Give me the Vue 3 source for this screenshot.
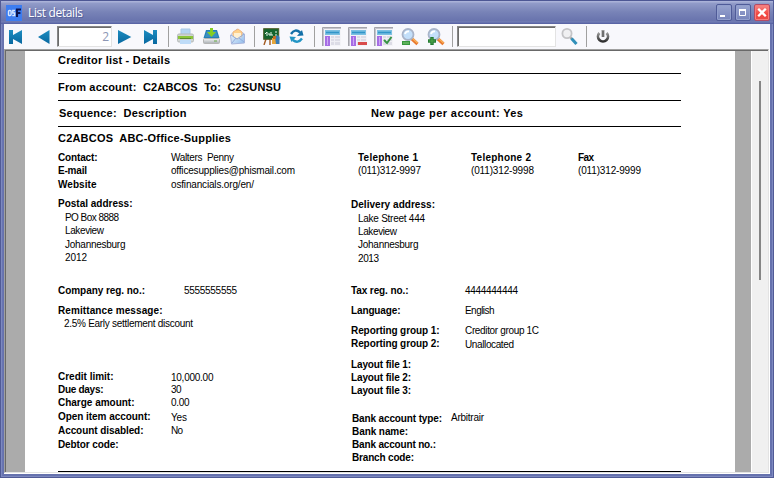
<script setup>
const titles = {
  list: 'Creditor list - Details',
  range: 'From account:  C2ABCOS  To:  C2SUNSU',
  sequence: 'Sequence:  Description',
  paging: 'New page per account: Yes',
  account: 'C2ABCOS  ABC-Office-Supplies',
}
// Each report line: [baseline, text, width, style, indent]
const columns = [
  [
    [161, 'Contact:', 39.5, 'b'], [174, 'E-mail', 29, 'b'], [188, 'Website', 38.5, 'b'],
    [207, 'Postal address:', 74.5, 'b'],
    [221, 'PO Box 8888', 54, '', 7], [234, 'Lakeview', 39, '', 7],
    [248, 'Johannesburg', 60.5, '', 7], [261, '2012', 22, '', 7],
    [294, 'Company reg. no.:', 87, 'b'], [314, 'Remittance message:', 104.5, 'b'],
    [327, '2.5% Early settlement discount', 129, '', 6],
    [380, 'Credit limit:', 55.5, 'b'], [393, 'Due days:', 45.5, 'b'],
    [406, 'Charge amount:', 76.5, 'b'], [420, 'Open item account:', 92.5, 'b'],
    [434, 'Account disabled:', 85.5, 'b'], [448, 'Debtor code:', 60.5, 'b'],
  ],
  [
    [161, 'Walters  Penny', 63], [174, 'officesupplies@phismail.com', 124],
    [188, 'osfinancials.org/en/', 83], [294, '5555555555', 53, '', 13],
    [381, '10,000.00', 42.5], [393, '30', 10.5], [406, '0.00', 18.5], [421, 'Yes', 16], [434, 'No', 12],
  ],
  [
    [161, 'Telephone 1', 60, 'b', 7], [174, '(011)312-9997', 63, '', 7],
    [208, 'Delivery address:', 84, 'b'], [222, 'Lake Street 444', 67, '', 7],
    [235, 'Lakeview', 39, '', 7], [248, 'Johannesburg', 60.5, '', 7], [262, '2013', 21, '', 7],
    [294, 'Tax reg. no.:', 57.5, 'b'], [314, 'Language:', 49.5, 'b'],
    [334, 'Reporting group 1:', 88.5, 'b'], [347, 'Reporting group 2:', 88.5, 'b'],
    [368, 'Layout file 1:', 60, 'b'], [381, 'Layout file 2:', 60, 'b'], [394, 'Layout file 3:', 60, 'b'],
    [422, 'Bank account type:', 90, 'b', 1], [435, 'Bank name:', 56, 'b', 1],
    [448, 'Bank account no.:', 84, 'b', 1], [461, 'Branch code:', 62, 'b', 1],
  ],
  [
    [161, 'Telephone 2', 60, 'b', 20], [174, '(011)312-9998', 63, '', 20],
    [294, '4444444444', 53, '', 14], [314, 'English', 29.5, '', 14],
    [334, 'Creditor group 1C', 74, '', 14], [348, 'Unallocated', 49, '', 14], [421, 'Arbitrair', 33],
  ],
  [[161, 'Fax', 16, 'b'], [174, '(011)312-9999', 63]],
].map((rows) => {
  let end = 149
  return rows.map(([base, text, width, kind, indent]) => {
    const gap = base - 9 - end
    end = base + 3
    return { text, width, bold: kind === 'b', style: { marginTop: gap + 'px', paddingLeft: (indent || 0) + 'px' } }
  })
})

// Tracks text out or in so that it fills its printed width
const vFit = {
  mounted(el, { value }) {
    const natural = el.getBoundingClientRect().width
    el.style.letterSpacing = (value - natural) / Math.max(1, el.textContent.length - 1) + 'px'
  },
}
</script>

<template>
  <div class="window">
    <header class="titlebar">
      <svg class="app" width="16" height="16" viewBox="0 0 16 16">
        <rect width="16" height="16" fill="#3d7df0" />
        <g fill="none" stroke="#d8e8ff" stroke-width="1.4">
          <rect x="2.5" y="5.5" width="2.6" height="5" rx="1" />
          <path d="M9 5.5H6.8V8H8.7V10.5H6.3" />
        </g>
        <path d="M11 12V4.5H15M11 8H14.4" fill="none" stroke="#0a1450" stroke-width="2.1" />
      </svg>
      <span class="title"><span v-fit="55">List details</span></span>
      <div class="winbtns">
        <i class="wb"><svg width="14" height="15"><rect x="3" y="10" width="5" height="2" fill="#fff" /></svg></i>
        <i class="wb"><svg width="14" height="15"><path d="M3.5 4V10.5H9.5V4" fill="none" stroke="#fff" /><rect x="3" y="4" width="7" height="2" fill="#fff" /></svg></i>
        <i class="wb close"><svg width="14" height="15"><path d="M3.2 3.7L10.8 11.3M10.8 3.7L3.2 11.3" stroke="#fff" stroke-width="2.3" /></svg></i>
      </div>
    </header>

    <div class="client">
      <nav class="toolbar">
        <svg width="0" height="0" class="defs">
          <defs>
            <linearGradient id="nav" x1="0" y1="0" x2="0" y2="1"><stop offset="0" stop-color="#1d8cc0" /><stop offset="1" stop-color="#0868a0" /></linearGradient>
            <linearGradient id="tray" x1="0" y1="0" x2="0" y2="1"><stop offset="0" stop-color="#f4f4f4" /><stop offset="1" stop-color="#a9afb5" /></linearGradient>
            <linearGradient id="env" x1="0" y1="0" x2="1" y2="1"><stop offset="0" stop-color="#fff" /><stop offset="1" stop-color="#8dbbed" /></linearGradient>
            <linearGradient id="pow" x1="0" y1="0" x2="0" y2="1"><stop offset="0" stop-color="#999" /><stop offset="1" stop-color="#303030" /></linearGradient>
          </defs>
        </svg>
        <span class="tool first"><svg width="14" height="14"><path d="M0 0H4V5L13 0V14L4 9V14H0Z" fill="url(#nav)" /></svg></span>
        <span class="tool prev"><svg width="12" height="14"><path d="M0 7L11.5 0V14Z" fill="url(#nav)" /></svg></span>
        <span class="field page">2</span>
        <span class="tool"><svg width="14" height="14"><path d="M0 0L13.3 7L0 14Z" fill="url(#nav)" /></svg></span>
        <span class="tool"><svg width="14" height="14"><path d="M13 0H9V5L0 0V14L9 9V14H13Z" fill="url(#nav)" /></svg></span>
        <span class="sep" />
        <span class="tool odd"><svg width="17" height="17"><path d="M4 1H13V8H4Z" fill="#b5d5f3" stroke="#a9c8e6" /><rect x=".5" y="6" width="16" height="8" rx="1.5" fill="#d0d4d2" stroke="#b4b9b9" /><path d="M1 8H16V11H1Z" fill="#8cc63b" /><path d="M3 10.5H14" stroke="#5d8a34" /><path d="M3 12H14V16H3Z" fill="#bfdcf8" /></svg></span>
        <span class="tool odd"><svg width="17" height="17"><path d="M3 2H14L16.5 10H.5Z" fill="#2580b5" /><path d="M4 3H13L15 9H2Z" fill="#3a8fc0" /><rect x=".5" y="10.5" width="16" height="5" rx="1" fill="url(#tray)" stroke="#b4b4b4" /><path d="M7 0H10V4H13L8.5 9L4 4H7Z" fill="#85ce22" /><path d="M11 13H14" stroke="#67ab45" /></svg></span>
        <span class="tool odd"><svg width="17" height="17"><path d="M1.5 7L8 1L15.5 6V15L2.5 16Z" fill="url(#env)" stroke="#a9b5dc" /><path d="M4 4L9 1L13 4V8L8 11L4 8Z" fill="#ffd18a" stroke="#f3bb84" /><path d="M5 5H12V9L8 11L5 9Z" fill="#fff0d2" /><path d="M2 7L8 11L15 6M3 15L7 10M15 14L10 10" fill="none" stroke="#93addc" /></svg></span>
        <span class="sep" />
        <span class="tool odd"><svg width="17" height="17"><path d="M3 11L1 17M7 11V17" stroke="#a25a22" stroke-width="1.4" /><rect x=".7" y=".7" width="15" height="10.6" fill="#14642e" stroke="#4c5a24" /><path d="M2 6L4 4V8M5 6H7V8M8 4V7H10M12 4H14M12 7H14" fill="none" stroke="#e7f6e8" /><rect x="9" y="10" width="4" height="6" fill="#e7a63b" /><path d="M12 9L15 7L16.5 9V16H13Z" fill="#387bb6" /><path d="M10 8H13V11H10Z" fill="#c46c25" /></svg></span>
        <span class="tool back"><svg width="17" height="17"><path d="M3 6Q7 0 12.2 4.5" fill="none" stroke="#136fa8" stroke-width="2.4" /><path d="M9 8L15.5 7.5L14 2Z" fill="#136fa8" /><path d="M14 10.5Q10 16 4.8 12" fill="none" stroke="#2395c5" stroke-width="2.4" /><path d="M1.5 8.5L8 9L3.4 14Z" fill="#2395c5" /></svg></span>
        <span class="sep" />
        <span v-for="n in 3" :key="n" class="tool odd">
          <svg width="19" height="19">
            <rect width="19" height="19" fill="#f3f3f7" /><path d="M.5 19V.5H19" fill="none" stroke="#a4a4ab" />
            <path d="M1.5 19V1.5H19" fill="none" stroke="#c4c4cc" />
            <rect x="3" y="3" width="15" height="5" fill="#7cc0e2" /><path d="M4 5.5H17" stroke="#3195c9" stroke-width="1.6" />
            <rect x="3" y="9" width="5" height="10" fill="#a66de5" /><path d="M5.5 10V18" stroke="#cda9f5" />
            <rect x="9" y="9" width="9" height="9" fill="#dcdce6" /><path d="M9 11.5H18M9 14.5H18M12.5 9V18" stroke="#eeeef4" />
            <rect v-if="n === 2" x="10" y="15" width="9" height="3" fill="#d94c4c" />
            <path v-if="n === 3" d="M10 13L13 16L17.5 10" fill="none" stroke="#379344" stroke-width="2" />
          </svg>
        </span>
        <span v-for="n in 2" :key="'z' + n" class="tool lens">
          <svg width="18" height="18">
            <path d="M10.5 10.5L16.5 16" stroke="#e8772e" stroke-width="3.2" /><path d="M11 10L16.5 15" stroke="#f8b259" stroke-width="1.3" />
            <circle cx="7" cy="6.5" r="5.5" fill="#c3dffa" stroke="#a9b4c9" stroke-width="1.8" />
            <path d="M4 6Q5 3 8 3.5" fill="none" stroke="#fff" stroke-width="1.8" />
            <template v-if="n === 1"><rect x="1" y="13" width="8" height="4" fill="#38983f" /><path d="M2 15H8" stroke="#83cb78" /></template>
            <template v-else><path d="M1 13H9M5 9V17" stroke="#247b32" stroke-width="3.4" /><path d="M2 13H8M5 10V16" stroke="#52a84d" /></template>
          </svg>
        </span>
        <span class="sep wide" />
        <span class="field find" />
        <span class="tool odd"><svg width="17" height="17"><path d="M9 9L11 11" stroke="#999" stroke-width="2" /><path d="M10.5 10.5L15.5 16" stroke="#318fb9" stroke-width="3" /><circle cx="6" cy="5.5" r="4.6" fill="#f0f0f2" stroke="#c4c4c7" stroke-width="1.8" /></svg></span>
        <span class="sep" />
        <span class="tool"><svg width="14" height="15"><path d="M3.4 4A5 5 0 1 0 10.6 4" fill="none" stroke="url(#pow)" stroke-width="2.7" /><path d="M7 1V8" stroke="#999" stroke-width="3" /><path d="M7 2V8" stroke="#444" /></svg></span>
      </nav>

      <main class="viewer">
        <article class="sheet">
          <div class="band band0"><span v-fit="112">{{ titles.list }}</span></div>
          <div class="band band1"><span v-fit="223">{{ titles.range }}</span></div>
          <div class="band band2">
            <span class="seq"><span v-fit="127.5">{{ titles.sequence }}</span></span>
            <span><span v-fit="152">{{ titles.paging }}</span></span>
          </div>
          <div class="account"><span v-fit="173">{{ titles.account }}</span></div>
          <section class="details">
            <div v-for="(col, c) in columns" :key="c" class="col">
              <div v-for="(row, r) in col" :key="r" class="row" :style="row.style">
                <span v-fit="row.width" :class="{ bold: row.bold }">{{ row.text }}</span>
              </div>
            </div>
          </section>
        </article>
        <aside class="scroll"><div class="thumb" /></aside>
      </main>
    </div>
  </div>
</template>

<style>
body { overflow: hidden; }
</style>

<style scoped>
* { box-sizing: border-box; }
.window {
  width: 774px; height: 478px; display: flex; flex-direction: column;
  background: #6672ae; border: 1px solid #515b96; border-top: 0; padding: 0 3px 3px;
  box-shadow: inset 1px 0 #7d89c0, inset -1px -1px #7d89c0, inset 2px 0 #6975b2;
}
.titlebar {
  height: 24px; flex: none; margin: 0 -3px; padding: 1px 3px 0 5px; display: flex; align-items: center;
  background: linear-gradient(#4d5794 0 1px, #aab2d8 1px 2px, #929cc9 3px, #7883b7 12px, #6873ad 21px, #7581b8 22px, #5964a5 23px);
}
.app { flex: none; }
.title { flex: 1; margin-left: 6px; color: #fff; font: 12px/16px "Open Sans", "Noto Sans", sans-serif; text-shadow: 1px 1px #56609a; }
.winbtns { display: flex; gap: 3px; }
.wb { width: 16px; height: 17px; border: 1px solid #4f5b98; border-radius: 2px; background: linear-gradient(#98a4cf, #7784bb); box-shadow: inset 0 0 0 1px #929fcd; display: flex; }
.wb.close { background: linear-gradient(#f58a8a, #f44640 60%, #e84c48); border-color: #b44b66; box-shadow: inset 0 0 0 1px #f77c7a; }
.wb svg { display: block; }
.client { flex: 1; min-height: 0; background: #fff; display: flex; flex-direction: column; }
.toolbar { height: 25px; flex: none; background: #f8f8fc; display: flex; align-items: center; }
.defs { position: absolute; }
.tool { width: 26px; height: 24px; flex: none; display: flex; align-items: center; justify-content: center; }
.tool svg { display: block; }
.odd { padding-left: 1px; }
.back { padding-right: 1px; }
.lens { padding-left: 2px; }
.first { width: 24px; }
.prev { width: 29px; padding-left: 3px; }
.field { height: 21px; flex: none; background: #fff; border: 1px solid; border-color: #868686 #e3e3e3 #e3e3e3 #868686; box-shadow: inset 1px 1px #6c6c6c; }
.page { width: 55px; padding-right: 2px; text-align: right; color: #8d97b5; font: 12px/19px "Open Sans", sans-serif; }
.find { width: 99px; }
.sep { width: 8px; height: 21px; flex: none; display: flex; padding-left: 4px; }
.sep.wide { width: 9px; }
.sep::before { content: ""; width: 1px; background: #a0a0a0; }
.viewer {
  flex: 1; min-height: 0; margin: 0 1px 1px 0; display: flex; padding-left: 19px; background: #ababab;
  border: 1px solid; border-color: #a0a0a0 #e3e3e3 #e3e3e3 #a0a0a0; box-shadow: inset 1px 1px #696969;
}
.sheet {
  width: 710px; margin: 1px 0 0 1px; padding: 0 54px 0 33px; background: #fff; color: #000; overflow: hidden;
  font-family: "Liberation Sans", Arial, sans-serif; white-space: pre; display: flex; flex-direction: column; flex: none;
}
.band, .account { flex: none; font-size: 11px; line-height: 12px; font-weight: bold; }
.band { border-bottom: 1px solid #000; display: flex; }
.band0 { height: 23px; padding-top: 3px; }
.band1 { height: 27px; padding-top: 7px; }
.band2 { height: 26px; padding: 6px 0 0 1px; }
.seq { width: 312px; }
.account { height: 22px; padding-top: 5px; }
.details { height: 323px; flex: none; display: grid; grid-template-columns: 113px 180px 100px 127px 103px; border-bottom: 1px solid #000; }
.col { min-width: 0; }
.row { height: 12px; font-size: 10px; line-height: 12px; }
.bold { font-weight: bold; }
.scroll { width: 17px; flex: none; margin: 1px 0 0 auto; background: #f0f0f0; border-left: 1px solid #fff; display: flex; justify-content: center; padding-top: 30px; }
.thumb { width: 2px; height: 199px; background: #858585; }
</style>
